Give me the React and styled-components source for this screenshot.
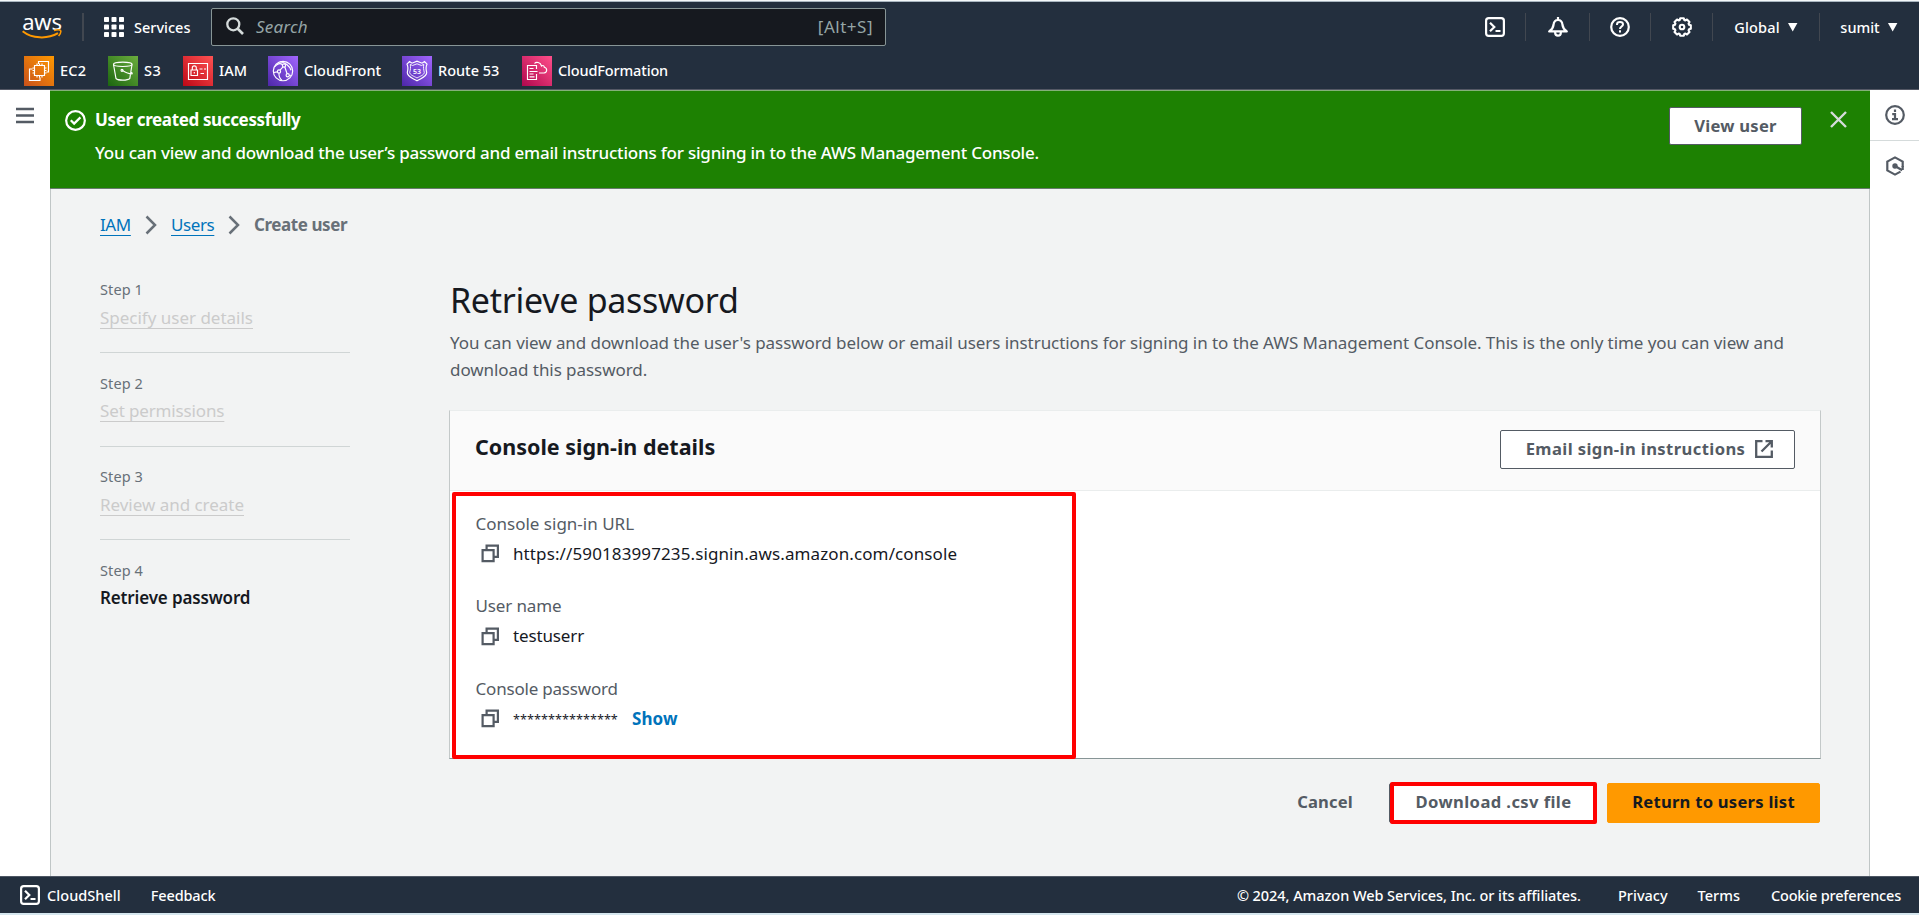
import React from "react";
import styled, { createGlobalStyle } from "styled-components";

const GlobalStyle = createGlobalStyle`
  * { box-sizing: border-box; }
  body {
    margin: 0;
    background: #fff;
    font-family: "Noto Sans", "Open Sans", sans-serif;
    font-size: 17px;
    color: #16191f;
  }
`;

const Page = styled.div`
  display: flex;
  flex-direction: column;
  width: 1919px;
  height: 915px;
  overflow: hidden;
  white-space: nowrap;
`;

const EdgeStrip = styled.div`
  height: 2px;
  flex: none;
  background: ${(p) => (p.$bottom ? "#d5e6ee" : "linear-gradient(#f4f8fa 50%, #a9b6c0 50%)")};
`;

const Header = styled.header`
  flex: none;
  height: 88px;
  background: #232f3e;
  color: #fff;
  border-bottom: 1px solid #545865;
`;

const TopRow = styled.div`
  display: flex;
  align-items: center;
  height: 50px;
  padding-left: 21px;
`;

const Logo = styled.a`
  display: flex;
  flex-direction: column;
  align-items: center;
  width: 42px;
  height: 30px;
`;

const LogoWord = styled.span`
  font-size: 22px;
  font-weight: 400;
  line-height: 18px;
  height: 17px;
  letter-spacing: -0.2px;
`;

const LogoRule = styled.span`
  width: 2px;
  height: 28px;
  margin: 0 20px 0 19px;
  background: #414750;
`;

const ServicesButton = styled.span`
  display: flex;
  align-items: center;
  gap: 10px;
  width: 107px;
`;

const NavText = styled.span`
  font-size: 14.5px;
  font-weight: 500;
  letter-spacing: ${(p) => p.$ls || 0}px;
`;

const SearchBox = styled.div`
  display: flex;
  align-items: center;
  width: 675px;
  height: 38px;
  padding: 0 12px 2px 14px;
  background: #16191f;
  border: 1px solid #879596;
  border-radius: 2px;
  color: #95a5a6;
`;

const SearchHint = styled.span`
  flex: 1;
  margin-left: 12px;
  font-style: italic;
  letter-spacing: 0.2px;
`;

const Shortcut = styled.span`
  letter-spacing: 0.5px;
`;

const NavCells = styled.nav`
  display: flex;
  margin-left: auto;
`;

const NavCell = styled.div`
  display: flex;
  align-items: center;
  justify-content: center;
  gap: 8px;
  width: ${(p) => p.$w}px;
  height: 28px;
  border-right: 1px solid ${(p) => (p.$last ? "transparent" : "#414750")};
`;

const Caret = styled.span`
  width: 10px;
  height: 9px;
  background: #fff;
  clip-path: polygon(0 0, 100% 0, 50% 100%);
`;

const Favorites = styled.div`
  display: flex;
  align-items: center;
  height: 37px;
  padding-left: 24px;
`;

const Favorite = styled.a`
  display: flex;
  align-items: center;
  gap: 6px;
  width: ${(p) => p.$w}px;
`;

const FavoriteName = styled(NavText)`
  padding-bottom: 2px;
`;

const ServiceTile = styled.svg`
  width: 30px;
  height: 30px;
  flex: none;
  background: linear-gradient(45deg, ${(p) => p.$from}, ${(p) => p.$to});
  fill: none;
  stroke: #fff;
  stroke-width: 1.15;
`;

const Body = styled.div`
  display: flex;
  flex: 1;
  min-height: 0;
`;

const LeftRail = styled.aside`
  width: 50px;
  padding: 16px 0 0 16px;
`;

const RightRail = styled.aside`
  width: 49px;
`;

const RailItem = styled.div`
  display: flex;
  align-items: center;
  justify-content: center;
  height: ${(p) => p.$h}px;
  border-bottom: ${(p) => (p.$line ? "1px solid #d5dbdb" : "none")};
`;

const Content = styled.main`
  width: 1820px;
  background: #f2f3f3;
  border: solid #c0c6c6;
  border-width: 0 1px;
`;

const Flash = styled.section`
  display: flex;
  align-items: flex-start;
  height: 99px;
  margin: 0 -1px;
  padding-left: 14.5px;
  background: #1d8102;
  border-top: 1px solid #84b078;
  border-bottom: 1px solid #687b6d;
  color: #fff;
`;

const FlashIcon = styled.span`
  display: flex;
  margin: 19px 9.5px 0 0;
`;

const FlashText = styled.div`
  flex: 1;
  padding-top: 15px;
`;

const FlashTitle = styled.div`
  font-weight: 700;
  line-height: 28px;
  letter-spacing: -0.36px;
`;

const FlashMessage = styled.div`
  margin-top: 5px;
  font-weight: 500;
  line-height: 28px;
  letter-spacing: -0.212px;
`;

const Button = styled.button`
  display: flex;
  align-items: center;
  justify-content: center;
  gap: 10px;
  width: ${(p) => p.$w}px;
  height: ${(p) => p.$h || 39}px;
  padding: 0 0 ${(p) => (p.$h === 40 ? 3 : 2)}px ${(p) => p.$pl || 0}px;
  border: 1px solid ${(p) => (p.$primary ? "#ff9900" : "#545b64")};
  border-radius: 2px;
  background: ${(p) => (p.$primary ? "#ff9900" : "#fff")};
  color: ${(p) => (p.$primary ? "#16191f" : "#545b64")};
  font: 700 16.6px "Noto Sans", sans-serif;
  letter-spacing: ${(p) => p.$ls || 0.25}px;
`;

const LinkButton = styled(Button)`
  border-color: transparent;
  background: transparent;
`;

const FlashAction = styled.div`
  margin: 16px 28px 0 0;
`;

const FlashClose = styled.span`
  display: flex;
  margin: 20px 23px 0 0;
`;

const Breadcrumbs = styled.nav`
  display: flex;
  align-items: center;
  height: 28px;
  margin: 22px 0 0 49px;
  line-height: 28px;
`;

const Crumb = styled.a`
  width: ${(p) => p.$w}px;
  color: #0073bb;
  letter-spacing: -0.4px;
  text-decoration: underline;
  text-decoration-thickness: 1px;
  text-underline-offset: 4px;
`;

const CurrentCrumb = styled.span`
  color: #687078;
  font-weight: 700;
  letter-spacing: -0.43px;
`;

const Chevron = styled.svg`
  width: 12px;
  height: 20px;
  margin: 0 14px;
  fill: none;
  stroke: #687078;
  stroke-width: 2.5;
`;

const Wizard = styled.div`
  display: flex;
  gap: 100px;
  padding: 39px 48px 0 49px;
`;

const Steps = styled.ol`
  width: 250px;
  margin: 0;
  padding: 0;
  list-style: none;
`;

const Step = styled.li`
  height: 75px;
  margin-bottom: 18.5px;
  border-bottom: 1px solid ${(p) => (p.$last ? "transparent" : "#d0d5d5")};
`;

const StepLabel = styled.div`
  font-size: 14.5px;
  line-height: 22px;
  letter-spacing: 0.1px;
  color: #687078;
`;

const StepTitle = styled.div`
  margin-top: 3.5px;
  line-height: 28px;
  font-weight: ${(p) => (p.$active ? 600 : 400)};
  color: ${(p) => (p.$active ? "#16191f" : "#cbcbcb")};
  letter-spacing: ${(p) => p.$ls}px;
  text-decoration: ${(p) => (p.$active ? "none" : "underline")};
  text-decoration-thickness: 1px;
  text-underline-offset: 4px;
  text-decoration-skip-ink: none;
`;

const Pane = styled.div`
  width: 1371px;
`;

const Heading = styled.h1`
  margin: 0;
  font-size: 34px;
  font-weight: 400;
  line-height: 45px;
  letter-spacing: -0.28px;
`;

const Description = styled.p`
  margin: 6px 0 27px;
  line-height: 27px;
  color: #545b64;
  letter-spacing: -0.06px;
`;

const Panel = styled.section`
  position: relative;
  height: 349px;
  margin-left: -1px;
  background: #fff;
  border: 1px solid #c4c9c9;
  border-top-color: #eaeded;
  border-bottom-color: #879596;
`;

const PanelHeader = styled.div`
  display: flex;
  justify-content: space-between;
  height: 80px;
  padding: 19px 25px 0;
  background: #fafafa;
  border-bottom: 1px solid #eaeded;
`;

const PanelTitle = styled.h2`
  margin: 0;
  font-size: 21.5px;
  font-weight: 700;
  line-height: 33px;
`;

const PanelBody = styled.div`
  padding: 18.7px 25px 0 25.5px;
`;

const Field = styled.div`
  height: 82.6px;
`;

const FieldLabel = styled.div`
  line-height: 28px;
  color: #545b64;
  letter-spacing: ${(p) => p.$ls || 0}px;
`;

const FieldValue = styled.div`
  display: flex;
  align-items: center;
  margin-top: 2px;
  padding-left: 5px;
  line-height: 28px;
  letter-spacing: ${(p) => p.$ls || 0}px;
`;

const Value = styled.span`
  margin-left: 13.5px;
`;

const MaskedValue = styled(Value)`
  width: 106px;
  font-size: 12.7px;
`;

const ShowLink = styled.a`
  margin-left: 13px;
  color: #0073bb;
  font-weight: 700;
  letter-spacing: 0.1px;
`;

const Highlight = styled.div`
  position: absolute;
  top: ${(p) => p.$top}px;
  left: ${(p) => p.$left}px;
  width: ${(p) => p.$w}px;
  height: ${(p) => p.$h}px;
  border: 4px solid #ff0000;
  border-radius: 2px;
`;

const Actions = styled.div`
  display: flex;
  justify-content: flex-end;
  margin: 24px 0 0;
  padding-right: 1px;
`;

const Marked = styled.div`
  position: relative;
  margin: 0 10px 0 16px;
`;

const Footer = styled.footer`
  display: flex;
  align-items: center;
  flex: none;
  height: 37px;
  padding: 0 18px 0 20px;
  background: #232f3e;
  border-top: 1px solid #4d5663;
  color: #fff;
`;

const FooterLink = styled(NavText)`
  margin-left: ${(p) => p.$ml}px;
  padding-bottom: 1px;
`;

const FooterSpacer = styled.span`
  flex: 1;
`;

const ShellIcon = () => (
  <svg width="20" height="20" viewBox="0 0 20 20" fill="none" stroke="#fff" strokeWidth="2.2">
    <rect x="1.1" y="1.1" width="17.8" height="17.8" rx="2.6" />
    <path d="M5 5.8L9.3 10L5 14.2M10.5 14h5" />
  </svg>
);

const BellIcon = () => (
  <svg width="20" height="20" viewBox="0 0 20 20" fill="none" stroke="#fff" strokeWidth="2.2" strokeLinejoin="round">
    <path d="M10 0v3M1.200 14.400h17.600C16 12.600 14.900 11.200 14.500 8C14.200 4.800 12.600 3 10 3S5.800 4.800 5.500 8C5.100 11.200 4 12.600 1.200 14.400z" />
    <path d="M7.200 14.500v1.500a2.800 2.600 0 0 0 5.600 0v-1.500" />
  </svg>
);

const HelpIcon = () => (
  <svg width="20" height="20" viewBox="0 0 20 20" fill="none" stroke="#fff" strokeWidth="2.2">
    <circle cx="10" cy="10" r="8.8" />
    <path d="M7 8V7.400C7 5.900 8.300 5 10 5s3 .9 3 2.400c0 2-3 2.200-3 4.600M10 13.200v2.300" strokeWidth="2" />
  </svg>
);

const gearPath = (() => {
  const points = [];
  const teeth = 8;
  for (let i = 0; i < teeth; i++) {
    [[-0.31, 7.4], [-0.2, 9], [0.2, 9], [0.31, 7.4]].forEach(([offset, r]) => {
      const a = (i * 2 * Math.PI) / teeth + offset;
      points.push(`${(10 + r * Math.sin(a)).toFixed(2)} ${(10 - r * Math.cos(a)).toFixed(2)}`);
    });
  }
  return `M${points.join("L")}Z`;
})();

const GearIcon = () => (
  <svg width="20" height="20" viewBox="0 0 20 20" fill="none" stroke="#fff" strokeWidth="2.1" strokeLinejoin="round">
    <path d={gearPath} />
    <circle cx="10" cy="10" r="2.3" />
  </svg>
);

const GridIcon = () => (
  <svg width="20" height="20" viewBox="0 0 20 20" fill="#fff">
    {[0, 7.5, 15].map((y) => [0, 7.5, 15].map((x) => <rect key={`${x}-${y}`} x={x} y={y} width="5" height="5" rx="0.8" />))}
  </svg>
);

const SearchIcon = () => (
  <svg width="18" height="18" viewBox="0 0 18 18" fill="none" stroke="#d5dbdb" strokeWidth="2.3">
    <circle cx="7.3" cy="7.3" r="6" />
    <path d="M11.500 11.500L17 17" strokeWidth="2.7" />
  </svg>
);

const Smile = () => (
  <svg width="40" height="11" viewBox="0 0 40 11" fill="none" stroke="#ff9900">
    <path d="M0.600 2.200C10 9.600 25 10.500 36 4.200" strokeWidth="2" />
    <path d="M32 1.500C35 0.700 38 0.800 38.600 1.600C39.100 2.500 38 5.300 36.600 7" strokeWidth="1.6" />
  </svg>
);

const MenuIcon = () => (
  <svg width="18" height="17" viewBox="0 0 18 17" stroke="#545b64" strokeWidth="2.4">
    <path d="M0 2h18M0 8.500h18M0 15h18" />
  </svg>
);

const InfoIcon = () => (
  <svg width="20" height="20" viewBox="0 0 20 20" fill="none" stroke="#545b64" strokeWidth="2.2">
    <circle cx="10" cy="10" r="8.8" />
    <path d="M10 4.500v2.600M7.200 9.200H10v4.500M7 14.200h6" />
  </svg>
);

const HexIcon = () => (
  <svg width="20" height="20" viewBox="0 0 20 20" fill="none" stroke="#545b64" strokeWidth="2.2">
    <path d="M17.700 11V5.600L10 1.400L2.300 5.600v8.800L10 18.600l5.500-3" />
    <circle cx="10" cy="10" r="1.6" fill="#545b64" />
    <path d="M10 10l7.200 4.200M17.700 10v4" />
  </svg>
);

const CheckIcon = () => (
  <svg width="21" height="21" viewBox="0 0 20 20" fill="none" stroke="#fff" strokeWidth="2.1">
    <circle cx="10" cy="10" r="8.9" />
    <path d="M5.500 9.800l3.200 3.200l6-6" />
  </svg>
);

const CloseIcon = () => (
  <svg width="17" height="17" viewBox="0 0 17 17" stroke="#d5dbdb" strokeWidth="2.4">
    <path d="M1 1l15 15M16 1L1 16" />
  </svg>
);

const CopyIcon = () => (
  <svg width="19" height="19" viewBox="0 0 19 19" fill="none" stroke="#545b64" strokeWidth="2.2">
    <path d="M1.600 6.100h11v11h-11zM5.600 6V1.600h11.300v11.300h-4" />
  </svg>
);

const ExternalIcon = () => (
  <svg width="18" height="18" viewBox="0 0 18 18" fill="none" stroke="#545b64" strokeWidth="2.3">
    <path d="M7.500 1.200H1.200v15.600h15.600V10.500M10.500 1.200h6.300v6.300M16.500 1.500L6.500 11.500" />
  </svg>
);

const favorites = [
  {
    name: "EC2", w: 84, ls: 0.2, from: "#c8511b", to: "#ff9900",
    art: <path d="M10.500 9.500h10v10h-10zM13 9.500v-2M15.500 9.500v-2M18 9.500v-2M13 19.500v2M15.500 19.500v2M18 19.500v2M10.500 12h-2M10.500 14.500h-2M10.500 17h-2M20.500 12h2M20.500 14.500h2M20.500 17h2M14.500 8V5.500H24.500V16H22.500M8.500 13H5.500v11.500H16V21.500" />,
  },
  {
    name: "S3", w: 75, ls: 0.5, from: "#1b660f", to: "#6cae3e",
    art: (
      <>
        <ellipse cx="14.8" cy="8.3" rx="9.3" ry="2.2" />
        <path d="M5.500 8.500L8 22.500C10 24.700 19.500 24.700 21.800 22.500L24 8.500M14.500 14.500C18 16.700 22 18 24.300 17.800C24.500 17 23.500 16.300 22.600 15.800" />
        <circle cx="14" cy="14.3" r="1" />
      </>
    ),
  },
  {
    name: "IAM", w: 85, ls: 0, from: "#bd0816", to: "#ff5252",
    art: <path d="M5.500 7.500h19v16h-19zM8 14h6.500v5.500H8zM9.300 14v-2.200a2 2 0 0 1 4 0V14M11.300 16v1.500M16.500 13h3M21 13h2M17.500 17.500h3.500" />,
  },
  {
    name: "CloudFront", w: 134, ls: 0, from: "#4d27a8", to: "#a166ff",
    art: (
      <>
        <circle cx="15" cy="15" r="9.7" />
        <circle cx="16" cy="9.5" r="1.6" />
        <circle cx="11" cy="15.5" r="1.6" />
        <circle cx="19.7" cy="19.2" r="1.6" />
        <path d="M15 10.800l-3 3.400M16.800 11l2.300 6.700M6.500 11C9 8 12 6.500 14.500 8.700M11 17.200c-.3 3 1 5.500 3 7.300M12 5.800c5 .5 9.500 4 11 8.500M5.500 16.500l4-.6M21.200 19.500l1.800-.2" />
      </>
    ),
  },
  {
    name: "Route 53", w: 120, ls: 0, from: "#4d27a8", to: "#a166ff",
    art: (
      <>
        <path d="M7.500 5.500L10 7.200L15 5.200L20 7.200L22.500 5.500L25 8.200C23.500 11 23.800 13 24.700 16.500C25 20.500 19.500 22 15 24.800C10.500 22 5 20.500 5.300 16.500C6.200 13 6.500 11 5 8.200Z" />
        <path d="M8.300 8.300L10.500 9.500L15 7.800L19.500 9.500L21.700 8.300C21.300 11.500 21.500 13.500 22.300 16.500C22 19 18.500 20 15 22C11.500 20 8 19 7.700 16.500C8.500 13.500 8.700 11.500 8.300 8.300Z" strokeWidth="0.9" />
        <text x="15" y="17.8" textAnchor="middle" fontSize="7" fontWeight="600" fill="#fff" stroke="none">53</text>
      </>
    ),
  },
  {
    name: "CloudFormation", w: 160, ls: -0.15, from: "#b0084d", to: "#ff4f8b",
    art: <path d="M14.500 13V9.500H5.500v14h9V18M7.500 12.500h4M7.500 15.500h8M7.500 18h4M7.500 20.800h5M12.500 7.500C14 5.500 18.500 6 19.500 10C21 9 22.300 9.700 22.300 11.200C25.500 12 25.500 16.500 22 17H17" />,
  },
];

const steps = [
  { title: "Specify user details", ls: -0.01 },
  { title: "Set permissions", ls: -0.14 },
  { title: "Review and create", ls: -0.03 },
  { title: "Retrieve password", ls: -0.15, active: true },
];

export default function App() {
  return (
    <Page>
      <GlobalStyle />
      <EdgeStrip />
      <Header>
        <TopRow>
          <Logo>
            <LogoWord>aws</LogoWord>
            <Smile />
          </Logo>
          <LogoRule />
          <ServicesButton>
            <GridIcon />
            <NavText>Services</NavText>
          </ServicesButton>
          <SearchBox>
            <SearchIcon />
            <SearchHint>Search</SearchHint>
            <Shortcut>[Alt+S]</Shortcut>
          </SearchBox>
          <NavCells>
            <NavCell $w={61}><ShellIcon /></NavCell>
            <NavCell $w={64}><BellIcon /></NavCell>
            <NavCell $w={61}><HelpIcon /></NavCell>
            <NavCell $w={62}><GearIcon /></NavCell>
            <NavCell $w={107}><NavText $ls={0.15}>Global</NavText><Caret /></NavCell>
            <NavCell $w={99} $last><NavText>sumit</NavText><Caret /></NavCell>
          </NavCells>
        </TopRow>
        <Favorites>
          {favorites.map((f) => (
            <Favorite key={f.name} $w={f.w}>
              <ServiceTile viewBox="0 0 30 30" $from={f.from} $to={f.to}>{f.art}</ServiceTile>
              <FavoriteName $ls={f.ls}>{f.name}</FavoriteName>
            </Favorite>
          ))}
        </Favorites>
      </Header>
      <Body>
        <LeftRail><MenuIcon /></LeftRail>
        <Content>
          <Flash>
            <FlashIcon><CheckIcon /></FlashIcon>
            <FlashText>
              <FlashTitle>User created successfully</FlashTitle>
              <FlashMessage>
                You can view and download the user’s password and email instructions for signing in to the AWS Management Console.
              </FlashMessage>
            </FlashText>
            <FlashAction><Button $w={133} $h={38}>View user</Button></FlashAction>
            <FlashClose><CloseIcon /></FlashClose>
          </Flash>
          <Breadcrumbs>
            <Crumb $w={31}>IAM</Crumb>
            <Chevron viewBox="0 0 12 20"><path d="M1.500 1.500L10 10L1.500 18.500" /></Chevron>
            <Crumb $w={43}>Users</Crumb>
            <Chevron viewBox="0 0 12 20"><path d="M1.500 1.500L10 10L1.500 18.500" /></Chevron>
            <CurrentCrumb>Create user</CurrentCrumb>
          </Breadcrumbs>
          <Wizard>
            <Steps>
              {steps.map((s, i) => (
                <Step key={s.title} $last={s.active}>
                  <StepLabel>Step {i + 1}</StepLabel>
                  <StepTitle $active={s.active} $ls={s.ls}>{s.title}</StepTitle>
                </Step>
              ))}
            </Steps>
            <Pane>
              <Heading>Retrieve password</Heading>
              <Description>
                You can view and download the user's password below or email users instructions for signing in to the AWS Management Console. This is the only time you can view and
                <br />
                download this password.
              </Description>
              <Panel>
                <PanelHeader>
                  <PanelTitle>Console sign-in details</PanelTitle>
                  <Button $w={295} $pl={4} $ls={0.4}>Email sign-in instructions<ExternalIcon /></Button>
                </PanelHeader>
                <PanelBody>
                  <Field>
                    <FieldLabel>Console sign-in URL</FieldLabel>
                    <FieldValue $ls={0.11}><CopyIcon /><Value>https://590183997235.signin.aws.amazon.com/console</Value></FieldValue>
                  </Field>
                  <Field>
                    <FieldLabel $ls={-0.14}>User name</FieldLabel>
                    <FieldValue $ls={-0.14}><CopyIcon /><Value>testuserr</Value></FieldValue>
                  </Field>
                  <Field>
                    <FieldLabel $ls={-0.2}>Console password</FieldLabel>
                    <FieldValue><CopyIcon /><MaskedValue>***************</MaskedValue><ShowLink>Show</ShowLink></FieldValue>
                  </Field>
                </PanelBody>
                <Highlight $top={81} $left={2} $w={624} $h={267} />
              </Panel>
              <Actions>
                <LinkButton $w={96} $h={40} $ls={0.1}>Cancel</LinkButton>
                <Marked>
                  <Button $w={208} $h={40} $pl={1} $ls={0.4}>Download .csv file</Button>
                  <Highlight $top={-1} $left={1} $w={207} $h={42} />
                </Marked>
                <Button $w={213} $h={40} $primary>Return to users list</Button>
              </Actions>
            </Pane>
          </Wizard>
        </Content>
        <RightRail>
          <RailItem $h={51} $line><InfoIcon /></RailItem>
          <RailItem $h={50}><HexIcon /></RailItem>
        </RightRail>
      </Body>
      <Footer>
        <ShellIcon />
        <FooterLink $ml={7} $ls={0.05}>CloudShell</FooterLink>
        <FooterLink $ml={30} $ls={-0.15}>Feedback</FooterLink>
        <FooterSpacer />
        <FooterLink $ls={-0.06}>© 2024, Amazon Web Services, Inc. or its affiliates.</FooterLink>
        <FooterLink $ml={37}>Privacy</FooterLink>
        <FooterLink $ml={30}>Terms</FooterLink>
        <FooterLink $ml={31} $ls={-0.19}>Cookie preferences</FooterLink>
      </Footer>
      <EdgeStrip $bottom />
    </Page>
  );
}
